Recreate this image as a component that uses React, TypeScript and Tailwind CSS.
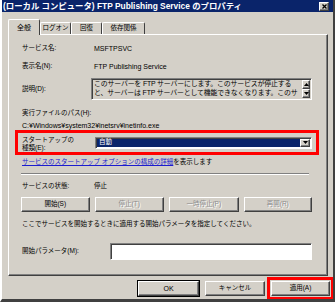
import React from 'react';

const raised =
  'border border-t-white border-l-white border-r-[#404040] border-b-[#404040] shadow-[inset_-1px_-1px_#808080] bg-[#d4d0c8]';
const sunken =
  'border border-t-[#808080] border-l-[#808080] border-r-white border-b-white shadow-[inset_1px_1px_#404040]';

function Btn({ label, disabled, className = '' }: { label: string; disabled?: boolean; className?: string }) {
  return (
    <div
      className={`${raised} flex items-center justify-center h-[15px] ${
        disabled ? 'text-[#8c8c8c] [text-shadow:1px_1px_0_#fff]' : 'text-black'
      } ${className}`}
    >
      {label}
    </div>
  );
}

function Tri({ up }: { up?: boolean }) {
  return (
    <svg width="5" height="3" viewBox="0 0 5 3">
      <path d={up ? 'M2.5 0 L5 3 L0 3 Z' : 'M0 0 L5 0 L2.5 3 Z'} fill="#000" />
    </svg>
  );
}

export default function App() {
  const tabs = [
    { label: 'ログオン', w: 'w-[31px]' },
    { label: '回復', w: 'w-[31px]' },
    { label: '依存関係', w: 'w-[43px]' },
  ];

  return (
    <div className="w-[335px] h-[302px] bg-[#d4d0c8] font-['Liberation_Sans','Noto_Sans_CJK_JP',sans-serif] text-[6.5px] leading-none text-black overflow-hidden border-l-2 border-l-white border-r-2 border-r-[#404040] border-b-[3px] border-b-[#404040] flex flex-col">
      {/* タイトルバー */}
      <div className="h-[12px] bg-[#0a246a] flex items-center justify-between pl-[1px] pr-[4px] shrink-0">
        <span className="text-white font-bold text-[8.4px] whitespace-nowrap">
          (ローカル コンピュータ) FTP Publishing Service のプロパティ
        </span>
        <div className={`${raised} w-[10px] h-[9px] flex items-center justify-center`}>
          <svg width="5" height="5" viewBox="0 0 5 5">
            <path d="M0.5 0.5 L4.5 4.5 M4.5 0.5 L0.5 4.5" stroke="#000" strokeWidth="1.3" />
          </svg>
        </div>
      </div>

      <div className="pl-[6px] pr-[5px] flex flex-col">
        {/* タブ */}
        <div className="flex items-end h-[22px] pt-[6px] relative z-10">
          <div className="w-[32px] h-[16px] bg-[#d4d0c8] border-t border-l border-t-white border-l-white border-r border-r-[#404040] rounded-t-[2px] flex items-center justify-center mb-[-1px] pb-[1px] text-[7px]">
            全般
          </div>
          {tabs.map((t) => (
            <div
              key={t.label}
              className={`${t.w} h-[12px] border-t border-t-white border-l border-l-white border-r border-r-[#404040] rounded-t-[2px] flex items-center justify-center`}
            >
              {t.label}
            </div>
          ))}
        </div>

        {/* タブパネル */}
        <div className="h-[242px] border border-t-white border-l-white border-r-[#404040] border-b-[#404040] shadow-[inset_-1px_-1px_#808080] pl-[13px] pr-[15px] flex flex-col">
          <div className="flex h-[10px] items-center mt-[8px]">
            <span className="w-[72px]">サービス名:</span>
            <span className="text-[7px]">MSFTPSVC</span>
          </div>
          <div className="flex h-[10px] items-center mt-[8px]">
            <span className="w-[72px]">表示名(N):</span>
            <span className="text-[7px]">FTP Publishing Service</span>
          </div>
          <div className="flex h-[22px] items-center mt-[7px]">
            <span className="w-[69px]">説明(D):</span>
            <div className={`${sunken} flex-1 h-full bg-[#d4d0c8] flex`}>
              <div className="flex-1 overflow-hidden pl-[2px] pt-[1px] leading-[8.5px] whitespace-nowrap text-[6.9px] tracking-[-0.15px]">
                <div>このサーバーを FTP サーバーにします。このサービスが停止する</div>
                <div>と、サーバーは FTP サーバーとして機能できなくなります。このサ</div>
              </div>
              <div className="w-[9px] flex flex-col justify-between py-[1px] pr-[1px]">
                <div className={`${raised} h-[9px] flex items-center justify-center`}>
                  <Tri up />
                </div>
                <div className={`${raised} h-[9px] flex items-center justify-center`}>
                  <Tri />
                </div>
              </div>
            </div>
          </div>
          <div className="h-[10px] flex items-center mt-[8px]">実行ファイルのパス(H):</div>
          <div className="h-[10px] flex items-center mt-[2px] whitespace-nowrap text-[7px]">
            C:¥Windows¥system32¥inetsrv¥inetinfo.exe
          </div>

          {/* スタートアップの種類 */}
          <div className="ml-[-7px] w-[304px] h-[25px] border-[3px] border-[#ff0000] flex items-center pl-[4px] pr-[4px]">
            <div className="w-[73px] leading-[8.5px] pt-[3px]">
              <div>スタートアップの</div>
              <div>種類(E):</div>
            </div>
            <div className={`${sunken} flex-1 h-[12px] bg-white flex items-center p-[1px]`}>
              <div className="flex-1 h-full bg-[#0a246a] text-white flex items-center pl-[2px]">自動</div>
              <div className={`${raised} w-[10px] h-full flex items-center justify-center`}>
                <Tri />
              </div>
            </div>
          </div>

          <div className="h-[9px] flex items-center mt-[3px] whitespace-nowrap">
            <span className="text-[#1c1ccf] underline">サービスのスタートアップ オプションの構成の詳細</span>
            <span>を表示します</span>
          </div>

          <div className="h-[2px] border-t border-t-[#808080] border-b border-b-white mt-[6px] mr-[3px] -ml-[1px]" />

          <div className="flex h-[10px] items-center mt-[6px]">
            <span className="w-[72px]">サービスの状態:</span>
            <span>停止</span>
          </div>

          <div className="flex gap-[5px] mt-[6px] -ml-[1px]">
            <Btn label="開始(S)" className="w-[69px]" />
            <Btn label="停止(T)" disabled className="w-[70px]" />
            <Btn label="一時停止(P)" disabled className="w-[70px]" />
            <Btn label="再開(R)" disabled className="w-[69px]" />
          </div>

          <div className="h-[10px] flex items-center mt-[7px] whitespace-nowrap">
            ここでサービスを開始するときに適用する開始パラメータを指定してください。
          </div>

          <div className="flex h-[17px] items-center mt-[14px]">
            <span className="w-[88px]">開始パラメータ(M):</span>
            <div className={`${sunken} flex-1 h-full bg-white`} />
          </div>
        </div>

        {/* 下部ボタン */}
        <div className="flex justify-end items-center gap-[6px] mt-[5px]">
          <Btn label="OK" className="w-[61px] outline outline-1 outline-black text-[7px]" />
          <Btn label="キャンセル" className="w-[60px]" />
          <div className="border-[3px] border-[#ff0000] p-[1px] -my-[5px] -mr-[6px] -ml-[4px]">
            <Btn label="適用(A)" className="w-[59px]" />
          </div>
        </div>
      </div>
    </div>
  );
}
